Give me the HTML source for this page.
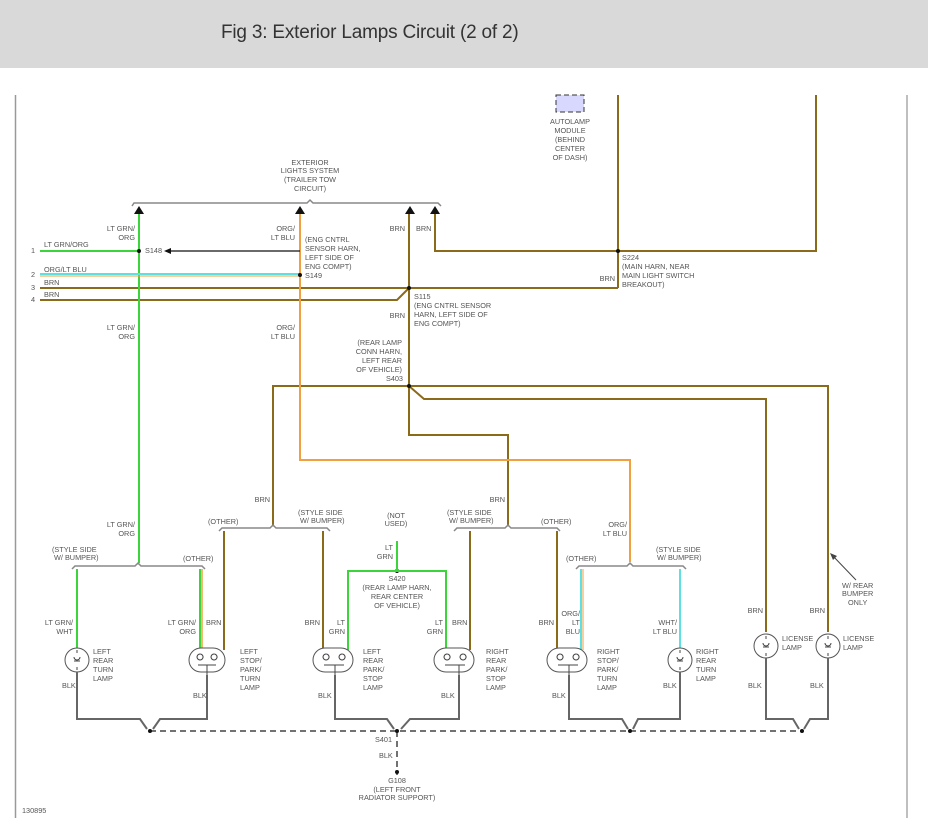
<!DOCTYPE html>
<html><head><meta charset="utf-8"><style>
html,body{margin:0;padding:0;background:#fff;}
.hd{position:absolute;left:0;top:0;width:928px;height:68px;background:#d9d9d9;}
.hd span{position:absolute;left:221px;top:22px;font:19px "Liberation Sans",sans-serif;color:#333;letter-spacing:-0.2px;}
svg{position:absolute;left:0;top:0;}
text{font-family:"Liberation Sans",sans-serif;font-size:7.3px;fill:#555;}
.b{stroke:#8b6a1a;stroke-width:2;fill:none}
.g{stroke:#3bd43b;stroke-width:2;fill:none}
.o{stroke:#f0a040;stroke-width:2;fill:none}
.c{stroke:#5ee0e0;stroke-width:2;fill:none}
.k{stroke:#666;stroke-width:2;fill:none}
.br{stroke:#888;stroke-width:1.5;fill:none}
.lp{stroke:#555;stroke-width:1;fill:#fff}
</style></head><body>
<div class="hd"><span>Fig 3: Exterior Lamps Circuit (2 of 2)</span></div>
<svg width="928" height="834" viewBox="0 0 928 834">
<line x1="15.5" y1="95" x2="15.5" y2="818" stroke="#999" stroke-width="1.5"/>
<line x1="907" y1="95" x2="907" y2="818" stroke="#aaa" stroke-width="1.5"/>
<rect x="556" y="95" width="28" height="17" fill="#d8d8ff" stroke="#333" stroke-dasharray="5,3"/>
<text x="570" y="124" text-anchor="middle">AUTOLAMP</text><text x="570" y="133" text-anchor="middle">MODULE</text><text x="570" y="142" text-anchor="middle">(BEHIND</text><text x="570" y="151" text-anchor="middle">CENTER</text><text x="570" y="160" text-anchor="middle">OF DASH)</text>
<text x="310" y="165" text-anchor="middle">EXTERIOR</text><text x="310" y="173" text-anchor="middle">LIGHTS SYSTEM</text><text x="310" y="182" text-anchor="middle">(TRAILER TOW</text><text x="310" y="191" text-anchor="middle">CIRCUIT)</text>
<path class="br" d="M132 206 L134 203 L307 203 L310 200 L313 203 L438 203 L441 206"/>
<path d="M134 214 L139 206 L144 214Z M295 214 L300 206 L305 214Z M405 214 L410 206 L415 214Z M430 214 L435 206 L440 214Z" fill="#111"/>
<path class="b" d="M618 95 L618 288 M816 95 L816 251 L618 251 M435 214 L435 251 L618 251 M40 288 L618 288 M40 300 L397 300 L409 288 M409 214 L409 435 L508 435 L508 525"/>
<path class="b" d="M273 525 L273 386 L828 386 L828 632 M409 386 L424 399 L766 399 L766 632"/>
<path class="g" d="M40 251 L139 251 M139 214 L139 563"/>
<path class="c" d="M40 274 L299 274"/><path d="M40 276 L299 276" stroke="#f0a040" stroke-width="1"/>
<path class="o" d="M300 214 L300 460 L630 460 L630 562"/>
<path d="M166 251 L300 251" stroke="#111" stroke-width="1.3"/><path d="M164 251 L171 248 L171 254Z" fill="#111"/>
<g fill="#111"><circle cx="139" cy="251" r="2"/><circle cx="300" cy="275" r="2"/><circle cx="409" cy="288" r="2"/><circle cx="618" cy="251" r="2"/><circle cx="409" cy="386" r="2"/><circle cx="397" cy="571" r="2"/></g>
<text x="31" y="253">1</text><text x="31" y="277">2</text><text x="31" y="290">3</text><text x="31" y="302">4</text>
<text x="44" y="247">LT GRN/ORG</text><text x="44" y="272">ORG/LT BLU</text><text x="44" y="285">BRN</text><text x="44" y="297">BRN</text>
<text x="135" y="231" text-anchor="end">LT GRN/</text><text x="135" y="240" text-anchor="end">ORG</text>
<text x="145" y="253">S148</text>
<text x="295" y="231" text-anchor="end">ORG/</text><text x="295" y="240" text-anchor="end">LT BLU</text>
<text x="305" y="242">(ENG CNTRL</text><text x="305" y="251">SENSOR HARN,</text><text x="305" y="260">LEFT SIDE OF</text><text x="305" y="269">ENG COMPT)</text><text x="305" y="278">S149</text>
<text x="405" y="231" text-anchor="end">BRN</text><text x="416" y="231">BRN</text>
<text x="414" y="299">S115</text><text x="414" y="308">(ENG CNTRL SENSOR</text><text x="414" y="317">HARN, LEFT SIDE OF</text><text x="414" y="326">ENG COMPT)</text>
<text x="405" y="318" text-anchor="end">BRN</text>
<text x="622" y="260">S224</text><text x="622" y="269">(MAIN HARN, NEAR</text><text x="622" y="278">MAIN LIGHT SWITCH</text><text x="622" y="287">BREAKOUT)</text>
<text x="615" y="281" text-anchor="end">BRN</text>
<text x="135" y="330" text-anchor="end">LT GRN/</text><text x="135" y="339" text-anchor="end">ORG</text>
<text x="295" y="330" text-anchor="end">ORG/</text><text x="295" y="339" text-anchor="end">LT BLU</text>
<text x="402" y="345" text-anchor="end">(REAR LAMP</text><text x="402" y="354" text-anchor="end">CONN HARN,</text><text x="402" y="363" text-anchor="end">LEFT REAR</text><text x="402" y="372" text-anchor="end">OF VEHICLE)</text><text x="403" y="381" text-anchor="end">S403</text>
<text x="270" y="502" text-anchor="end">BRN</text><text x="505" y="502" text-anchor="end">BRN</text>
<text x="135" y="527" text-anchor="end">LT GRN/</text><text x="135" y="536" text-anchor="end">ORG</text>
<text x="627" y="527" text-anchor="end">ORG/</text><text x="627" y="536" text-anchor="end">LT BLU</text>
<path class="br" d="M219 531 L222 528 L270 528 L273 525 L276 528 L327 528 L330 531 M454 531 L457 528 L505 528 L508 525 L511 528 L557 528 L560 531"/>
<text x="208" y="524">(OTHER)</text><text x="298" y="515">(STYLE SIDE</text><text x="300" y="523">W/ BUMPER)</text>
<text x="447" y="515">(STYLE SIDE</text><text x="449" y="523">W/ BUMPER)</text><text x="541" y="524">(OTHER)</text>
<text x="396" y="518" text-anchor="middle">(NOT</text><text x="396" y="526" text-anchor="middle">USED)</text>
<text x="393" y="550" text-anchor="end">LT</text><text x="393" y="559" text-anchor="end">GRN</text>
<path class="g" d="M397 541 L397 571 M348 650 L348 571 L446 571 L446 650"/>
<text x="397" y="581" text-anchor="middle">S420</text><text x="397" y="590" text-anchor="middle">(REAR LAMP HARN,</text><text x="397" y="599" text-anchor="middle">REAR CENTER</text><text x="397" y="608" text-anchor="middle">OF VEHICLE)</text>
<path class="b" d="M224 531 L224 650 M323 531 L323 650 M470 531 L470 650 M557 531 L557 650"/>
<path class="br" d="M72 569 L75 566 L135 566 L138 563 L141 566 L202 566 L205 569 M576 569 L579 566 L627 566 L630 563 L633 566 L683 566 L686 569"/>
<text x="52" y="552">(STYLE SIDE</text><text x="54" y="560">W/ BUMPER)</text><text x="183" y="561">(OTHER)</text>
<text x="566" y="561">(OTHER)</text><text x="656" y="552">(STYLE SIDE</text><text x="657" y="560">W/ BUMPER)</text>
<path class="g" d="M77 569 L77 648"/>
<path class="g" d="M200 569 L200 650" stroke-width="1"/><path d="M202 569 L202 650" stroke="#f0a040" stroke-width="1.5"/>
<path class="c" d="M581 569 L581 650" stroke-width="1"/><path d="M583 569 L583 650" stroke="#f0a040" stroke-width="1"/>
<path class="c" d="M680 569 L680 648" stroke="#a0f0f0"/>
<text x="73" y="625" text-anchor="end">LT GRN/</text><text x="73" y="634" text-anchor="end">WHT</text>
<text x="196" y="625" text-anchor="end">LT GRN/</text><text x="196" y="634" text-anchor="end">ORG</text><text x="206" y="625">BRN</text>
<text x="320" y="625" text-anchor="end">BRN</text><text x="345" y="625" text-anchor="end">LT</text><text x="345" y="634" text-anchor="end">GRN</text>
<text x="443" y="625" text-anchor="end">LT</text><text x="443" y="634" text-anchor="end">GRN</text><text x="452" y="625">BRN</text>
<text x="554" y="625" text-anchor="end">BRN</text><text x="580" y="616" text-anchor="end">ORG/</text><text x="580" y="625" text-anchor="end">LT</text><text x="580" y="634" text-anchor="end">BLU</text>
<text x="677" y="625" text-anchor="end">WHT/</text><text x="677" y="634" text-anchor="end">LT BLU</text>
<text x="763" y="613" text-anchor="end">BRN</text><text x="825" y="613" text-anchor="end">BRN</text>
<text x="842" y="588">W/ REAR</text><text x="842" y="596">BUMPER</text><text x="848" y="605">ONLY</text>
<path d="M832 555 L856 580" stroke="#444" stroke-width="1"/><path d="M830 553 L837 556 L833 560Z" fill="#444"/>
<g class="lp">
<circle cx="77" cy="660" r="12"/>
<rect x="189" y="648" width="36" height="24" rx="12"/>
<rect x="313" y="648" width="40" height="24" rx="12"/>
<rect x="434" y="648" width="40" height="24" rx="12"/>
<rect x="547" y="648" width="40" height="24" rx="12"/>
<circle cx="680" cy="660" r="12"/>
<circle cx="766" cy="646" r="12"/><circle cx="828" cy="646" r="12"/>
</g>
<g fill="none" stroke="#444" stroke-width="1">
<path d="M77 650 v3 M77 667 v3 M74 657 a3 3 0 1 0 6 0 M74 661 h6"/>
<path d="M680 650 v3 M680 667 v3 M677 657 a3 3 0 1 0 6 0 M677 661 h6"/>
<path d="M766 636 v3 M766 653 v3 M763 643 a3 3 0 1 0 6 0 M763 647 h6"/>
<path d="M828 636 v3 M828 653 v3 M825 643 a3 3 0 1 0 6 0 M825 647 h6"/>
<path d="M200 654 a3 3 0 1 0 0.1 0 M214 654 a3 3 0 1 0 0.1 0 M198 665 h18 M207 665 v10"/>
<path d="M326 654 a3 3 0 1 0 0.1 0 M342 654 a3 3 0 1 0 0.1 0 M324 665 h20 M335 665 v10"/>
<path d="M447 654 a3 3 0 1 0 0.1 0 M463 654 a3 3 0 1 0 0.1 0 M445 665 h20 M459 665 v10"/>
<path d="M560 654 a3 3 0 1 0 0.1 0 M576 654 a3 3 0 1 0 0.1 0 M558 665 h20 M569 665 v10"/>
</g>
<text x="93" y="654">LEFT</text><text x="93" y="663">REAR</text><text x="93" y="672">TURN</text><text x="93" y="681">LAMP</text>
<text x="240" y="654">LEFT</text><text x="240" y="663">STOP/</text><text x="240" y="672">PARK/</text><text x="240" y="681">TURN</text><text x="240" y="690">LAMP</text>
<text x="363" y="654">LEFT</text><text x="363" y="663">REAR</text><text x="363" y="672">PARK/</text><text x="363" y="681">STOP</text><text x="363" y="690">LAMP</text>
<text x="486" y="654">RIGHT</text><text x="486" y="663">REAR</text><text x="486" y="672">PARK/</text><text x="486" y="681">STOP</text><text x="486" y="690">LAMP</text>
<text x="597" y="654">RIGHT</text><text x="597" y="663">STOP/</text><text x="597" y="672">PARK/</text><text x="597" y="681">TURN</text><text x="597" y="690">LAMP</text>
<text x="696" y="654">RIGHT</text><text x="696" y="663">REAR</text><text x="696" y="672">TURN</text><text x="696" y="681">LAMP</text>
<text x="782" y="641">LICENSE</text><text x="782" y="650">LAMP</text><text x="843" y="641">LICENSE</text><text x="843" y="650">LAMP</text>
<path class="k" d="M77 672 L77 719 L140 719 L147 729 M207 675 L207 719 L160 719 L153 729 M335 675 L335 719 L387 719 L394 729 M459 675 L459 719 L410 719 L401 729 M569 675 L569 719 L622 719 L628 729 M680 672 L680 719 L638 719 L633 729 M766 658 L766 719 L793 719 L799 729 M828 658 L828 719 L810 719 L804 729"/>
<path d="M150 731 L802 731 M397 731 L397 775" stroke="#444" stroke-width="1.5" stroke-dasharray="6,4"/>
<g fill="#111"><circle cx="150" cy="731" r="2"/><circle cx="397" cy="731" r="2"/><circle cx="630" cy="731" r="2"/><circle cx="802" cy="731" r="2"/><circle cx="397" cy="772" r="2"/></g>
<text x="62" y="688">BLK</text><text x="193" y="698">BLK</text><text x="318" y="698">BLK</text><text x="441" y="698">BLK</text><text x="552" y="698">BLK</text><text x="663" y="688">BLK</text><text x="748" y="688">BLK</text><text x="810" y="688">BLK</text>
<text x="375" y="742">S401</text><text x="379" y="758">BLK</text>
<text x="397" y="783" text-anchor="middle">G108</text><text x="397" y="792" text-anchor="middle">(LEFT FRONT</text><text x="397" y="800" text-anchor="middle">RADIATOR SUPPORT)</text>
<text x="22" y="813">130895</text>
</svg>
</body></html>
